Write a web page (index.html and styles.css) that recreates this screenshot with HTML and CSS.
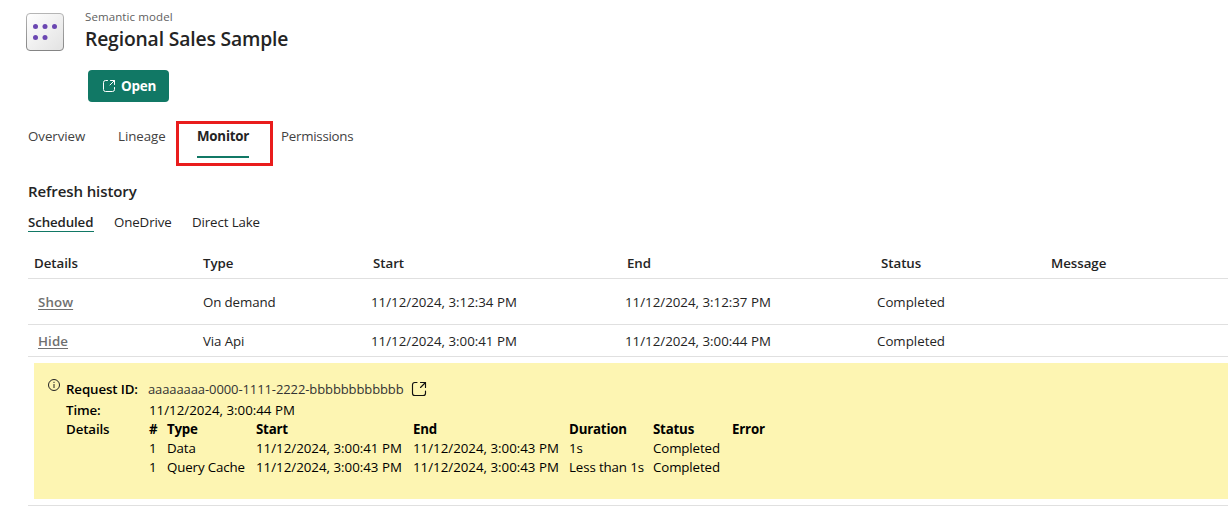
FILE: index.html
```html
<!DOCTYPE html>
<html lang="en">
<head>
<meta charset="utf-8">
<title>Regional Sales Sample</title>
<link rel="stylesheet" href="styles.css">
</head>
<body>
<header class="header">
  <svg class="model-icon" width="38" height="38" viewBox="0 0 38 38">
    <defs>
      <linearGradient id="tile" x1="0" y1="0" x2="1" y2="1"><stop offset="0" stop-color="#fff"/><stop offset="1" stop-color="#e2e2e2"/></linearGradient>
      <linearGradient id="edge" x1="0" y1="0" x2="0" y2="1"><stop offset="0" stop-color="#b5b5b5"/><stop offset="1" stop-color="#858585"/></linearGradient>
    </defs>
    <rect x=".5" y=".5" width="37" height="37" rx="3.5" fill="url(#tile)" stroke="url(#edge)"/>
    <g fill="#6b47b2"><circle cx="9.5" cy="13.5" r="2.5"/><circle cx="19" cy="13.5" r="2.5"/><circle cx="28.5" cy="13.5" r="2.5"/><circle cx="9.5" cy="24.5" r="2.5"/><circle cx="19" cy="24.5" r="2.5"/></g>
  </svg>
  <div class="heading">
    <div class="kind"><span>Semantic model</span></div>
    <h1 class="title"><span>Regional Sales Sample</span></h1>
    <button class="open">
      <svg width="14" height="14" viewBox="0 0 14 14" fill="none" stroke="#fff" stroke-linecap="round"><path d="M5.5 1.5H3.5Q1.5 1.5 1.5 3.5V10.5Q1.5 12.5 3.5 12.5H10.5Q12.5 12.5 12.5 10.5V8.5M8.5 1.5H12.5V5.5M12.5 1.5L8 6"/></svg>
      <span>Open</span>
    </button>
  </div>
</header>
<nav class="tabs">
  <a class="tab overview">Overview</a>
  <a class="tab lineage">Lineage</a>
  <div class="callout"><a class="tab monitor">Monitor</a></div>
  <a class="tab permissions">Permissions</a>
</nav>
<main class="main">
  <h2 class="section-title"><span>Refresh history</span></h2>
  <nav class="subtabs">
    <a class="subtab scheduled">Scheduled</a>
    <a class="subtab onedrive">OneDrive</a>
    <a class="subtab lake">Direct Lake</a>
  </nav>
  <section class="history">
    <div class="row head"><span>Details</span><span>Type</span><span>Start</span><span>End</span><span>Status</span><span>Message</span></div>
    <div class="row first"><a class="toggle">Show</a><span>On demand</span><span class="start">11/12/2024, 3:12:34 PM</span><span class="end">11/12/2024, 3:12:37 PM</span><span class="status">Completed</span></div>
    <div class="row second"><a class="toggle">Hide</a><span>Via Api</span><span class="start">11/12/2024, 3:00:41 PM</span><span class="end">11/12/2024, 3:00:44 PM</span><span class="status">Completed</span></div>
    <div class="panel-row">
      <div class="panel">
        <svg class="info" width="12" height="12" viewBox="0 0 12 12" fill="none" stroke="#222"><circle cx="6" cy="6" r="5.5"/><path d="M6 5V9M6 2.8V4"/></svg>
        <div class="facts">
          <div class="fact request"><b class="label">Request ID:</b><span class="guid">aaaaaaaa-0000-1111-2222-bbbbbbbbbbbb</span>
            <svg width="16" height="16" viewBox="0 0 16 16" fill="none" stroke="#111" stroke-width="1.15" stroke-linecap="round"><path d="M6 1.5H3.8Q1.5 1.5 1.5 3.8V12.2Q1.5 14.5 3.8 14.5H12.2Q14.5 14.5 14.5 12.2V10M9.5 1.5H14.5V6.5M14.5 1.5L9.5 6.5"/></svg>
          </div>
          <div class="fact time"><b class="label">Time:</b><span class="stamp">11/12/2024, 3:00:44 PM</span></div>
          <div class="fact"><b class="label">Details</b>
            <div class="attempts">
              <b>#</b><b>Type</b><b>Start</b><b>End</b><b>Duration</b><b>Status</b><b>Error</b>
              <span>1</span><span>Data</span><span class="stamp">11/12/2024, 3:00:41 PM</span><span class="stamp">11/12/2024, 3:00:43 PM</span><span>1s</span><span>Completed</span><span></span>
              <span>1</span><span>Query Cache</span><span class="stamp">11/12/2024, 3:00:43 PM</span><span class="stamp">11/12/2024, 3:00:43 PM</span><span>Less than 1s</span><span>Completed</span><span></span>
            </div>
          </div>
        </div>
      </div>
    </div>
  </section>
</main>
</body>
</html>
```
FILE: styles.css
```css
* { box-sizing: border-box; }
body { margin: 0; height: 506px; overflow: hidden; background: #fff; color: #242424; font: 13.3px/20px "Open Sans", "Noto Sans", sans-serif; letter-spacing: -0.12px; white-space: nowrap; }
h1, h2 { margin: 0; }
.header { display: flex; height: 121px; padding: 7px 0 0 26px; gap: 21px; }
.model-icon { margin-top: 6px; }
.kind { height: 20px; color: #616161; font-size: 11.5px; font-weight: 500; letter-spacing: 0.1px; }
.title { height: 24px; font-size: 19.3px; line-height: 24px; font-weight: 600; letter-spacing: -0.15px; }
.open { display: flex; align-items: center; gap: 5px; width: 81px; height: 32px; margin: 19px 0 0 3px; padding: 0 0 0 14px; border: 0; border-radius: 4px; background: #117865; color: #fff; font: 700 13.5px/20px "Open Sans", sans-serif; letter-spacing: -0.25px; }
.tabs { display: flex; height: 45px; padding-left: 28px; color: #424242; }
.tab { height: 37px; padding-top: 5px; letter-spacing: -0.05px; }
.overview { width: 89px; }
.lineage { width: 59px; padding-left: 1px; }
.callout { width: 97px; height: 45px; margin-right: 8px; padding: 2px 0 0 18px; border: 3px solid #e91c1c; }
.monitor { display: block; width: 52px; height: 32px; padding-top: 0; border-bottom: 2px solid #117865; color: #242424; font-weight: 700; letter-spacing: -0.2px; }
.permissions { letter-spacing: -0.25px; }
.main { padding-left: 28px; }
.section-title { height: 46px; padding-top: 15px; font-size: 15px; font-weight: 600; letter-spacing: -0.1px; }
.subtabs { display: flex; height: 36px; gap: 20px; }
.subtab { height: 20px; }
.scheduled { width: 66px; border-bottom: 1px solid #117865; font-weight: 600; }
.onedrive { width: 58px; }
.row { display: grid; grid-template-columns: 169px 170px 254px 254px 170px 1fr; align-items: center; padding-left: 6px; border-bottom: 1px solid #e0e0e0; }
.head { height: 31px; font-weight: 600; letter-spacing: -0.05px; }
.first { height: 46px; }
.second { height: 32px; }
.toggle { padding-left: 4px; color: #707070; font-weight: 600; letter-spacing: 0.1px; text-decoration: underline; text-underline-offset: 2px; }
.start { margin-left: -2px; letter-spacing: 0; }
.end { margin-left: -2px; letter-spacing: 0; }
.status { margin-left: -4px; letter-spacing: 0; }
.panel-row { height: 149px; padding: 6px 0 6px 6px; border-bottom: 1px solid #e0e0e0; }
.panel { display: flex; height: 136px; padding: 16px 0 0 14px; gap: 6px; background: #fdf5b2; color: #000; }
.fact { display: flex; line-height: 19px; }
.request { height: 22px; padding-bottom: 2px; align-items: center; }
.time { height: 19px; }
.label { width: 83px; font-weight: 600; }
.guid { width: 263px; color: #333; font-size: 13px; margin-left: -1px; letter-spacing: -0.1px; }
.stamp { letter-spacing: 0; }
.attempts { display: grid; grid-template-columns: 18px 89px 157px 156px 84px 79px auto; grid-auto-rows: 19px; }
.attempts b { font-weight: 700; letter-spacing: -0.2px; }
```
